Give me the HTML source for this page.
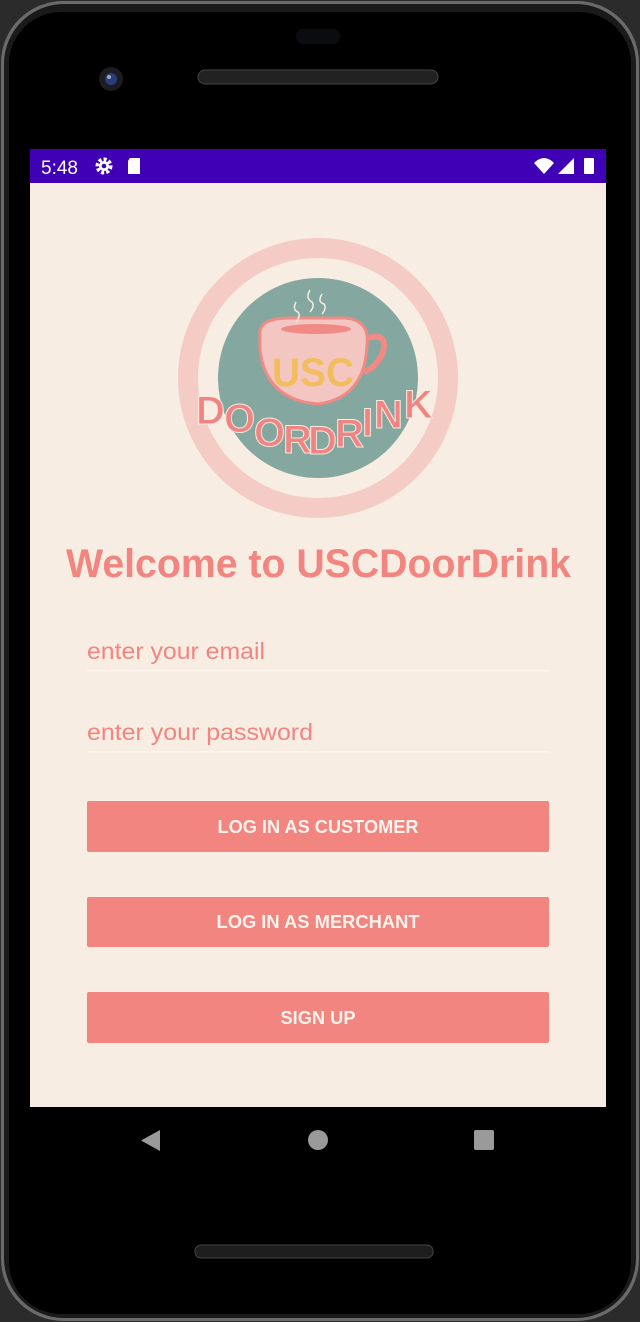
<!DOCTYPE html>
<html><head><meta charset="utf-8"><style>
html,body{margin:0;padding:0;width:640px;height:1322px;overflow:hidden;background:#2a2a2a;font-family:"Liberation Sans",sans-serif}
</style></head><body>
<svg width="640" height="1322" viewBox="0 0 640 1322" xmlns="http://www.w3.org/2000/svg" style="position:absolute;left:0;top:0">
<rect width="640" height="1322" fill="#2b2b2b"/>
<rect x="1" y="1" width="638" height="1320" rx="62" fill="#6a6a6a"/>
<rect x="4" y="4" width="632" height="1314" rx="60" fill="#1a1a1a"/>
<rect x="9" y="12" width="622" height="1302" rx="52" fill="#000"/>
<rect x="296" y="29" width="44" height="15" rx="7" fill="#0b0c10"/>
<rect x="198" y="70" width="240" height="14" rx="7" fill="#222" stroke="#444" stroke-width="1"/>
<circle cx="111" cy="79" r="12" fill="#1c1c22"/>
<circle cx="111" cy="79" r="6" fill="#2b3d78"/>
<circle cx="109" cy="77" r="2" fill="#9ab"/>
<rect x="195" y="1245" width="238" height="13" rx="6" fill="#1e1e1e" stroke="#444"/>
<rect x="30" y="149" width="576" height="34" fill="#3f00b6"/>
<text x="41" y="174" fill="#fff" font-size="19">5:48</text>
<circle cx="104" cy="166" r="6.5" fill="none" stroke="#fff" stroke-width="4" stroke-dasharray="3 2"/>
<circle cx="104" cy="166" r="5" fill="#fff"/><circle cx="104" cy="166" r="2.3" fill="#3f00b6"/>
<path d="M130 158h10v16h-12v-13z" fill="#fff"/>
<path d="M534 163 Q544 153 554 163 L544 174 Z" fill="#fff"/>
<path d="M574 158 V174 H558 Z" fill="#fff"/>
<rect x="584" y="158" width="10" height="16" rx="1" fill="#fff"/>
<rect x="30" y="183" width="576" height="924" fill="#f8ede3"/>
<circle cx="318" cy="378" r="130" fill="none" stroke="#f4cbc5" stroke-width="20"/>
<circle cx="318" cy="378" r="100" fill="#84a89f"/>
<path d="M260 335 Q258 318 290 318 L345 318 Q370 320 367 345 Q365 398 318 404 Q266 400 260 350 Z" fill="#f4c6c2" stroke="#ef8a85" stroke-width="3"/>
<ellipse cx="316" cy="329" rx="35" ry="5" fill="#ef8a85"/>
<path d="M368 338 Q388 332 383 352 Q376 368 364 372" fill="none" stroke="#ef8a85" stroke-width="6"/>
<path d="M296 302 q-4 8 2 10 q3 4 -2 10 M310 290 q-5 8 2 12 q3 4 -2 10 M322 294 q-5 8 2 10 q3 4 -2 10" fill="none" stroke="#f8ede3" stroke-width="1.5"/>
<text x="272" y="386" font-size="40" font-weight="bold" fill="#f2bd5c" textLength="82" lengthAdjust="spacingAndGlyphs">USC</text>
<g font-size="40" font-weight="bold" fill="#ef8482" stroke="#fbe8df" stroke-width="1">
<text x="196" y="424">D</text><text x="224" y="432">O</text><text x="254" y="446">O</text>
<text x="283" y="453">R</text><text x="308" y="454">D</text><text x="335" y="447">R</text>
<text x="362" y="436">I</text><text x="374" y="428">N</text><text x="404" y="418">K</text>
</g>
<text x="66" y="577" font-size="40" font-weight="bold" fill="#f2857f" textLength="505" lengthAdjust="spacingAndGlyphs">Welcome to USCDoorDrink</text>
<text x="87" y="659" font-size="23" fill="#f2857f" textLength="178" lengthAdjust="spacingAndGlyphs">enter your email</text>
<rect x="87" y="670" width="462" height="1.5" fill="#fff5ee"/>
<text x="87" y="740" font-size="23" fill="#f2857f" textLength="226" lengthAdjust="spacingAndGlyphs">enter your password</text>
<rect x="87" y="751" width="462" height="1.5" fill="#fff5ee"/>
<rect x="87" y="801" width="462" height="51" rx="2" fill="#f2857f"/>
<text x="318" y="833" font-size="18" font-weight="bold" fill="#fdf3ec" text-anchor="middle" textLength="201" lengthAdjust="spacingAndGlyphs">LOG IN AS CUSTOMER</text>
<rect x="87" y="897" width="462" height="50" rx="2" fill="#f2857f"/>
<text x="318" y="928" font-size="18" font-weight="bold" fill="#fdf3ec" text-anchor="middle" textLength="203" lengthAdjust="spacingAndGlyphs">LOG IN AS MERCHANT</text>
<rect x="87" y="992" width="462" height="51" rx="2" fill="#f2857f"/>
<text x="318" y="1024" font-size="18" font-weight="bold" fill="#fdf3ec" text-anchor="middle" textLength="75" lengthAdjust="spacingAndGlyphs">SIGN UP</text>
<path d="M160 1130 V1151 L141 1140.5 Z" fill="#9a9a9a"/>
<circle cx="318" cy="1140" r="10" fill="#9a9a9a"/>
<rect x="474" y="1130" width="20" height="20" rx="2" fill="#9a9a9a"/>
</svg>
</body></html>
